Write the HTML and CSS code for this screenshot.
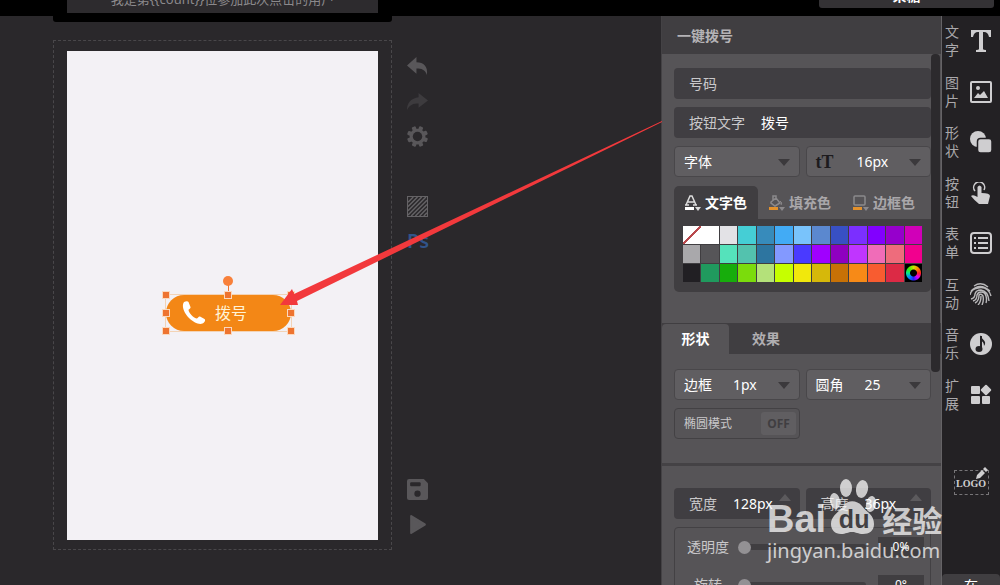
FILE: index.html
```
<!DOCTYPE html>
<html lang="zh-CN">
<head>
    <meta charset="UTF-8">
    <meta name="viewport" content="width=device-width, initial-scale=1.0">
    <title>一键拨号</title>
    <link rel="stylesheet" href="styles.css">
</head>
<body>
    <header class="topbar">
        <div class="hint"><p>我是第{{count}}位参加此次点击的用户</p></div>
        <button class="account">朵糖</button>
    </header>

    <main class="editor">
        <section class="workspace">
            <div class="frame">
                <div class="page">
                    <div class="selection">
                        <button class="dial">
                            <svg width="24" height="24" viewBox="0 0 24 24"><path d="M2 1C4 0 6 0 6.500 1L8.500 6C9 7.500 6.500 8 6.500 9C7 12 11 16.500 14.500 17.500C16 17.500 16.500 15 18 15.500L22.500 18C24 19 22.500 21.500 20.500 22.500C17 24 11 21 7 17C2.500 12.500-1 5 2 1Z" fill="#fff"/></svg>
                            <span>拨号</span>
                        </button>
                        <i class="stem"></i>
                        <i class="knob"></i>
                        <i class="handle top left"></i>
                        <i class="handle top center"></i>
                        <i class="handle top right"></i>
                        <i class="handle middle left"></i>
                        <i class="handle middle right"></i>
                        <i class="handle bottom left"></i>
                        <i class="handle bottom center"></i>
                        <i class="handle bottom right"></i>
                    </div>
                </div>
            </div>
            <div class="tools">
                <button aria-label="撤销"><svg viewBox="0 0 20 20"><path d="M0 9L9 1V6C16 6 20 10 19 18C17 13 14 12 9 12V17Z" fill="#59575a"/></svg></button>
                <button aria-label="重做"><svg viewBox="0 0 20 20"><path d="M20 9L11 2V6C4 7 0 11 0 18C3 13 6 12 11 12V16Z" fill="#3d3b3e"/></svg></button>
                <button aria-label="设置"><svg viewBox="0 0 20 20"><g fill="#59575a"><rect x="8" y="0" width="4" height="20" rx="1" transform="rotate(22 10 10)"/><rect x="8" y="0" width="4" height="20" rx="1" transform="rotate(67 10 10)"/><rect x="8" y="0" width="4" height="20" rx="1" transform="rotate(112 10 10)"/><rect x="8" y="0" width="4" height="20" rx="1" transform="rotate(157 10 10)"/><circle cx="10" cy="10" r="7.500"/></g><circle cx="10" cy="10" r="4.500" fill="#2a282b"/></svg></button>
                <button class="group" aria-label="背景"><svg viewBox="0 0 20 20"><path d="M.5.5H19.500V19.500H.5Z" fill="none" stroke="#656366"/><path d="M1 6L6 1M1 10L10 1M1 14L14 1M1 18L18 1M4 19L19 4M8 19L19 8M12 19L19 12M16 19L19 16" stroke="#656366" stroke-width="1.400"/></svg></button>
                <button class="ps">Ps</button>
                <button class="last" aria-label="保存"><svg viewBox="0 0 20 20"><path d="M2 0H16L20 4V18Q20 20 18 20H2Q0 20 0 18V2Q0 0 2 0Z" fill="#59575a"/><rect x="3" y="3" width="10" height="4" rx="1" fill="#2a282b"/><circle cx="10" cy="14" r="3" fill="#2a282b"/></svg></button>
                <button aria-label="播放"><svg viewBox="0 0 20 20"><path d="M4 2L17 10L4 18Z" fill="#59575a" stroke="#59575a" stroke-width="2" stroke-linejoin="round"/></svg></button>
            </div>
            <svg class="arrow" width="382" height="184" viewBox="0 0 382 184"><path d="M0 184L12 168L14 173L382 0V1L17 180L18 184Z" fill="#f2393c"/></svg>
        </section>

        <aside class="panel">
            <h1>一键拨号</h1>
            <div class="scroller">
                <div class="fields">
                    <label class="field"><span>号码</span><input type="text"></label>
                    <label class="field"><span>按钮文字</span><input type="text" value="拨号"></label>
                    <div class="pair">
                        <label class="pick font"><select aria-label="字体"><option>字体</option></select></label>
                        <label class="pick size"><span class="tt">tT</span><select aria-label="字号"><option>16px</option></select></label>
                    </div>
                    <div class="colors">
                        <div class="color-tabs">
                            <button class="active">
                                <svg width="16" height="16" viewBox="0 0 16 16"><path d="M1 10L5 1H7L11 10M3 7H9M0 10H4M8 10H12" fill="none" stroke="#ddd" stroke-width="1.500"/><path d="M0 12H9V15H0Z" fill="#fff"/><path d="M10 12H16L13 16Z" fill="#ddd"/></svg>文字色
                            </button>
                            <button>
                                <svg width="16" height="16" viewBox="0 0 16 16"><path d="M2 7L7 3L11 8L6 11L2 8ZM4 5V1H7V5" fill="none" stroke="#8b898c" stroke-width="1.500"/><path d="M11 6Q14 8 12 10" fill="none" stroke="#8b898c"/><path d="M0 12H9V15H0Z" fill="#e3912c"/><path d="M10 12H16L13 16Z" fill="#8b898c"/></svg>填充色
                            </button>
                            <button>
                                <svg width="16" height="16" viewBox="0 0 16 16"><rect x="1" y="1" width="11" height="9" rx="1" fill="none" stroke="#8b898c" stroke-width="1.500"/><path d="M0 12H9V15H0Z" fill="#e3912c"/><path d="M10 12H16L13 16Z" fill="#8b898c"/></svg>边框色
                            </button>
                        </div>
                        <div class="palette" id="palette"></div>
                    </div>
                </div>

                <div class="shape-tabs">
                    <button class="active">形状</button>
                    <button>效果</button>
                </div>
                <div class="fields shape">
                    <div class="pair">
                        <label class="pick"><span>边框</span><select><option>1px</option></select></label>
                        <label class="pick"><span>圆角</span><select><option>25</option></select></label>
                    </div>
                    <div class="toggle"><span id="ellipse">椭圆模式</span><button aria-labelledby="ellipse" aria-pressed="false">OFF</button></div>
                </div>

                <div class="fields geometry">
                    <div class="pair">
                        <label class="field step"><span>宽度</span><input type="text" value="128px"></label>
                        <label class="field step"><span>高度</span><input type="text" value="36px"></label>
                    </div>
                    <div class="sliders">
                        <div class="slider"><label for="alpha">透明度</label><input type="range" id="alpha" value="0"><input type="text" aria-label="透明度数值" value="0%"></div>
                        <div class="slider"><label for="rotate">旋转</label><input type="range" id="rotate" value="0"><input type="text" aria-label="旋转角度" value="0°"></div>
                    </div>
                </div>
            </div>
            <div class="scrollbar"></div>
            <div class="watermark">
                <svg width="46" height="58" viewBox="0 0 46 58"><g fill="#fff"><ellipse cx="16" cy="10" rx="6" ry="9"/><ellipse cx="32" cy="11" rx="6" ry="9" transform="rotate(10 32 11)"/><ellipse cx="5" cy="23" rx="5" ry="8" transform="rotate(-10 5 23)"/><ellipse cx="41" cy="26" rx="5" ry="8" transform="rotate(10 41 26)"/><path d="M14 27C18 22 27 22 32 28C36 34 44 36 44 46C44 53 39 56 33 56C28 56 26 54 22 54C18 54 16 56 11 56C5 56 1 52 1 46C1 37 10 34 14 27Z"/></g></svg>
                <div class="brand"><span>Bai</span><span class="du">du</span><span class="cn">经验</span></div>
                <div class="site">jingyan.baidu.com</div>
            </div>
        </aside>

        <nav class="rail">
            <div class="rail-items">
                <a href="#"><span>文字</span><svg viewBox="0 0 22 22"><path d="M1 0H21V7H19Q18 2 14 2H13V19Q13 20 16 20V22H6V20Q9 20 9 19V2H8Q4 2 3 7H1Z" fill="#cfced0"/></svg></a>
                <a href="#"><span>图片</span><svg viewBox="0 0 22 22"><rect x="1" y="1" width="20" height="20" rx="1" fill="none" stroke="#cfced0" stroke-width="2"/><circle cx="8" cy="7" r="2" fill="#cfced0"/><path d="M4 17L8 12L10 14L14 10L18 17Z" fill="#cfced0"/></svg></a>
                <a href="#"><span>形状</span><svg viewBox="0 0 22 22"><circle cx="8" cy="8" r="8" fill="#cfced0"/><rect x="7.500" y="7.500" width="14.500" height="14.500" rx="3" fill="#cfced0" stroke="#232124" stroke-width="1.500"/></svg></a>
                <a href="#"><span>按钮</span><svg viewBox="0 0 22 22"><path d="M5 9A5.500 5.500 0 1 1 14 8" fill="none" stroke="#cfced0" stroke-width="1.500"/><path d="M7.500 5Q9.500 2 11.500 5V11Q20 11 20 14L18 22H9Q4 18 1 14Q3 12 7.500 15Z" fill="#cfced0"/></svg></a>
                <a href="#"><span>表单</span><svg viewBox="0 0 22 22"><rect x="1" y="1" width="20" height="20" rx="3" fill="none" stroke="#cfced0" stroke-width="2"/><path d="M4 6H6M4 11H6M4 16H6M8 6H18M8 11H18M8 16H18" stroke="#cfced0" stroke-width="2"/></svg></a>
                <a href="#"><span>互动</span><svg viewBox="0 0 22 22"><g fill="none" stroke="#b9b8ba" stroke-width="1.400"><path d="M4 3Q11-2 18 4M1 8Q10-1 20 8M0 12Q1 6 8 5Q18 3 21 13M1 16Q5 15 5 11Q6 7 11 7Q18 8 19 18M3 18Q7 17 7 12Q8 9 11 9Q15 9 16 13Q17 17 16 20M5 20Q9 18 9 12Q11 10 13 13Q14 18 12 22M8 22Q11 19 11 13"/></g></svg></a>
                <a href="#"><span>音乐</span><svg viewBox="0 0 22 22"><circle cx="11" cy="11" r="11" fill="#cfced0"/><path d="M11 3V15" stroke="#232124" stroke-width="2"/><ellipse cx="9" cy="16" rx="3.500" ry="3" fill="#232124"/><path d="M10 2C11 6 18 8 14 13C14 9 12 8 10 8Z" fill="#232124"/></svg></a>
                <a href="#"><span>扩展</span><svg viewBox="0 0 22 22"><g fill="#cfced0"><rect x="1" y="2" width="9" height="8" rx="1"/><rect x="1" y="12" width="9" height="8" rx="1"/><rect x="12" y="12" width="8" height="8" rx="1"/><rect x="12" y="2" width="8" height="8" rx="1" transform="rotate(45 16 6)"/></g></svg></a>
            </div>
            <a class="logo" href="#">LOGO<svg width="12" height="12" viewBox="0 0 12 12"><path d="M0 12L1 8L6 3L9 6L4 11ZM7 2L9 0L12 3L10 5Z" fill="#cfced0"/></svg></a>
            <button class="online">在</button>
        </nav>
    </main>

    <script>
        const colors = [
            '#ffffff', '#ffffff', '#e3e2e6', '#45ced5', '#378bbb', '#42abf5', '#79c3fb', '#5b88cf', '#3850c4', '#7b2fff', '#8200ff', '#9600cc', '#d000b8',
            '#a9a8ab', '#565558', '#55e2bb', '#53c2ae', '#2d75a0', '#8399ff', '#4a3aff', '#a000ff', '#8f00c0', '#c035ff', '#f06cb8', '#ee6c7c', '#f2008e',
            '#211f23', '#209a5e', '#17ad0c', '#7bdc0c', '#b4e17a', '#c6ff00', '#f1e80c', '#d6b80a', '#c77106', '#f78a17', '#f85c30', '#dc2a45', '#000000'
        ];
        const palette = document.getElementById('palette');

        colors.forEach((color, i) => {
            const swatch = document.createElement('button');
            swatch.style.backgroundColor = color;
            swatch.setAttribute('aria-label', color);
            if (i === 0) swatch.className = 'none';
            if (i === colors.length - 1) swatch.className = 'wheel';
            palette.appendChild(swatch);
        });
    </script>
</body>
</html>
```
FILE: styles.css
```
* {
    box-sizing: border-box;
}
body {
    display: flex;
    flex-direction: column;
    height: 100vh;
    margin: 0;
    overflow: hidden;
    font-family: "Noto Sans", "Noto Sans CJK SC", sans-serif;
    font-size: 14px;
    line-height: 20px;
    color: #c9c8ca;
    background: #2a282b;
}
button, input, select {
    font: inherit;
    color: inherit;
    margin: 0;
    padding: 0;
    border: none;
    background: none;
}
button {
    cursor: pointer;
}
a {
    color: inherit;
    text-decoration: none;
}

/* top bar */
.topbar {
    display: flex;
    justify-content: space-between;
    align-items: flex-start;
    flex: none;
    height: 16px;
    padding: 0 6px 0 53px;
    background: #000;
    z-index: 1;
}
.hint {
    width: 339px;
    height: 22px;
    padding: 0 14px;
    background: #000;
    border-radius: 0 0 3px 3px;
}
.hint p {
    display: flex;
    justify-content: center;
    align-items: flex-end;
    height: 13px;
    margin: 0;
    padding-bottom: 4px;
    overflow: hidden;
    font-size: 13px;
    color: #8b898c;
    background: #2d2b2e;
}
.account {
    display: flex;
    justify-content: center;
    align-items: flex-end;
    width: 175px;
    height: 8px;
    padding-bottom: 2px;
    overflow: hidden;
    font-weight: bold;
    color: #fff;
    background: #343235;
    border-radius: 0 0 3px 3px;
}

.editor {
    display: flex;
    flex: 1;
    min-height: 0;
}

/* canvas */
.workspace {
    position: relative;
    display: flex;
    gap: 15px;
    flex: 1;
    padding: 24px 0 35px 53px;
}
.frame {
    display: flex;
    flex: none;
    width: 339px;
    padding: 10px 13px 9px;
    border: 1px dashed #49474a;
}
.page {
    position: relative;
    flex: 1;
    background: #f3f1f5;
}
.selection {
    position: absolute;
    left: 98px;
    top: 243px;
    width: 127px;
    height: 38px;
    border: 1px solid #f3d3b5;
}
.dial {
    display: flex;
    align-items: center;
    gap: 9px;
    width: 100%;
    height: 100%;
    padding-left: 16px;
    font-size: 16px;
    color: #fff3d6;
    background: #f38716;
    border-radius: 18px;
}
.stem {
    position: absolute;
    left: 62px;
    top: -10px;
    width: 1px;
    height: 8px;
    background: #f3742c;
}
.knob {
    position: absolute;
    left: 57px;
    top: -19px;
    width: 10px;
    height: 10px;
    border-radius: 50%;
    background: #f8803a;
}
.handle {
    position: absolute;
    width: 8px;
    height: 8px;
    border: 1px solid #fbd9bd;
    background: #ee7430;
}
.handle.top {
    top: -4px;
}
.handle.middle {
    top: 14px;
}
.handle.bottom {
    bottom: -4px;
}
.handle.left {
    left: -4px;
}
.handle.center {
    left: 58px;
}
.handle.right {
    right: -4px;
}
.tools {
    display: flex;
    flex-direction: column;
    gap: 15px;
    padding: 16px 0;
}
.tools button {
    width: 21px;
    height: 20px;
}
.tools svg {
    display: block;
}
.tools .group {
    margin-top: 35px;
}
.tools .last {
    margin-top: auto;
}
.tools .ps {
    font-size: 20px;
    font-weight: 600;
    color: #31548a;
}
.arrow {
    position: absolute;
    right: -1px;
    top: 105px;
    z-index: 1;
}

/* settings panel */
.panel {
    position: relative;
    display: flex;
    flex-direction: column;
    flex: none;
    width: 281px;
    background: #565457;
    border-left: 1px solid #444245;
    border-right: 1px solid #656366;
}
.panel h1 {
    flex: none;
    margin: 0;
    padding: 10px 15px 8px;
    font-size: 14px;
    font-weight: bold;
    color: #b5b3b6;
    background: #403e41;
}
.scroller {
    flex: 1;
    min-height: 0;
    overflow: hidden;
}
.fields {
    display: flex;
    flex-direction: column;
    gap: 8px;
    padding: 14px 10px 31px 12px;
}
.field {
    display: flex;
    align-items: center;
    gap: 16px;
    height: 31px;
    padding-left: 15px;
    background: #403e42;
    border-radius: 4px;
}
.field span {
    flex: none;
}
.field input {
    flex: 1;
    min-width: 0;
    width: 0;
    color: #fff;
}
.pair {
    display: grid;
    grid-template-columns: 1fr 1fr;
    gap: 6px;
}
.pick {
    position: relative;
    display: flex;
    align-items: center;
    gap: 21px;
    height: 31px;
    padding-left: 9px;
    color: #fff;
    background: #605e61;
    border: 1px solid #49474a;
    border-radius: 4px;
}
.pick select {
    flex: 1;
    min-width: 0;
    appearance: none;
}
.pick::after {
    content: "";
    position: absolute;
    right: 9px;
    top: 12px;
    border: 6px solid transparent;
    border-top: 7px solid #3b393c;
    border-bottom: none;
    pointer-events: none;
}
.pick .tt {
    width: 20px;
    font-family: "Liberation Serif", serif;
    font-size: 18px;
    font-weight: bold;
    color: #1d1b1e;
}
.colors {
    margin-top: 1px;
    background: #403e41;
    border-radius: 5px;
}
.color-tabs {
    display: flex;
    background: #565457;
}
.color-tabs button {
    display: flex;
    align-items: center;
    justify-content: center;
    gap: 4px;
    width: 84px;
    height: 33px;
    font-weight: bold;
    color: #a9a7aa;
}
.color-tabs .active {
    color: #fff;
    background: #403e41;
    border-radius: 5px 5px 0 0;
}
.palette {
    display: grid;
    grid-template-columns: repeat(13, 1fr);
    gap: 1px;
    padding: 7px 9px 10px;
}
.palette button {
    height: 18px;
}
.palette .none {
    margin-right: -1px;
    background-image: linear-gradient(135deg, transparent 47%, #b9494d 47%, #b9494d 53%, transparent 53%);
}
.palette .wheel {
    background-image: radial-gradient(circle, #000 3px, transparent 4px, transparent 7px, #000 8px), conic-gradient(#c4e800, #f80, #f22, #d0f, #22f, #08f, #0e8, #4e0, #c4e800);
}
.shape-tabs {
    display: flex;
    background: #403e41;
}
.shape-tabs button {
    width: 74px;
    height: 30px;
    margin-top: 1px;
    font-weight: bold;
    color: #b0aeb1;
}
.shape-tabs .active {
    width: 67px;
    color: #fff;
    background: #565457;
    border-radius: 4px 4px 0 0;
}
.shape {
    padding-top: 15px;
    padding-bottom: 24px;
}
.toggle {
    display: flex;
    align-items: center;
    justify-content: space-between;
    width: 126px;
    height: 31px;
    padding: 0 3px 0 9px;
    font-size: 12px;
    border: 1px solid #434144;
    border-radius: 4px;
}
.toggle button {
    width: 35px;
    height: 23px;
    font-weight: bold;
    color: #403e41;
    background: #605e61;
    border-radius: 3px;
}
.geometry {
    padding-top: 22px;
    border-top: 3px solid #444245;
}
.step {
    position: relative;
}
.step::after {
    content: "";
    position: absolute;
    right: 9px;
    top: 6px;
    border: 6px solid transparent;
    border-bottom: 7px solid #5c5a5d;
    border-top: none;
}
.sliders {
    display: flex;
    flex-direction: column;
    gap: 18px;
    padding: 9px 6px 9px 11px;
    border: 1px solid #434144;
    border-radius: 4px;
}
.slider {
    display: flex;
    align-items: center;
    gap: 8px;
}
.slider label {
    flex: none;
    width: 44px;
    text-align: center;
}
.slider input[type="range"] {
    flex: 1;
    min-width: 0;
    height: 6px;
    appearance: none;
    background: #403e41;
    border-radius: 3px;
}
.slider input[type="range"]::-webkit-slider-thumb {
    appearance: none;
    width: 13px;
    height: 13px;
    border-radius: 50%;
    background: #939194;
}
.slider input[type="text"] {
    width: 46px;
    height: 20px;
    margin-left: 4px;
    font-size: 12px;
    text-align: center;
    color: #fff;
    background: #403e41;
}
.scrollbar {
    position: absolute;
    right: 1px;
    top: 38px;
    width: 9px;
    height: 318px;
    border-radius: 4px;
    background: #2c2a2d;
}

/* site mark over the panel */
.watermark {
    position: absolute;
    right: -4px;
    top: 462px;
    width: 178px;
    opacity: 0.72;
    color: #fff;
    pointer-events: none;
}
.watermark svg {
    position: absolute;
    left: 63px;
    top: 0;
}
.brand {
    display: flex;
    align-items: center;
    padding-top: 21px;
    font: bold 38px/40px "Liberation Sans", sans-serif;
}
.du {
    position: relative;
    width: 56px;
    font-size: 25px;
    text-align: center;
    color: #3d3b3e;
}
.brand .cn {
    font: bold 30px/40px "Noto Sans CJK SC", sans-serif;
}
.site {
    font-size: 20px;
    line-height: 24px;
}

/* right rail */
.rail {
    display: flex;
    flex-direction: column;
    align-items: center;
    flex: none;
    width: 58px;
    background: #232124;
}
.rail-items {
    display: grid;
    grid-auto-rows: 1fr;
    width: 100%;
    height: 404px;
}
.rail-items a {
    display: flex;
    align-items: center;
    gap: 11px;
    padding-left: 3px;
    line-height: 18px;
    color: #aaa8ab;
}
.rail-items span {
    width: 14px;
    word-break: break-all;
}
.rail-items svg {
    width: 22px;
    height: 22px;
}
.logo {
    position: relative;
    width: 35px;
    height: 25px;
    margin-top: 50px;
    border: 1px dashed #777578;
    font: bold 10px/25px "Liberation Serif", serif;
    text-align: center;
    color: #cfced0;
}
.logo svg {
    position: absolute;
    right: 0;
    top: -4px;
}
.online {
    flex: none;
    width: 100%;
    height: 24px;
    margin-top: auto;
    margin-bottom: -13px;
    color: #fff;
    background: #403e41;
    border-radius: 4px;
}
```
